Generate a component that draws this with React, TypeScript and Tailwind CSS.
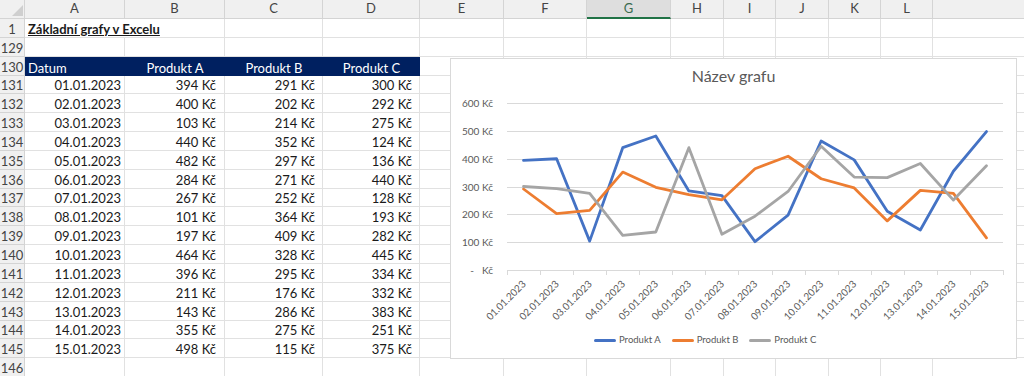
import React from 'react';

const rows: [string, number, number, number][] = [
  ['01.01.2023', 394, 291, 300],
  ['02.01.2023', 400, 202, 292],
  ['03.01.2023', 103, 214, 275],
  ['04.01.2023', 440, 352, 124],
  ['05.01.2023', 482, 297, 136],
  ['06.01.2023', 284, 271, 440],
  ['07.01.2023', 267, 252, 128],
  ['08.01.2023', 101, 364, 193],
  ['09.01.2023', 197, 409, 282],
  ['10.01.2023', 464, 328, 445],
  ['11.01.2023', 396, 295, 334],
  ['12.01.2023', 211, 176, 332],
  ['13.01.2023', 143, 286, 383],
  ['14.01.2023', 355, 275, 251],
  ['15.01.2023', 498, 115, 375],
];

const cols = [
  { l: 'A', w: 'w-[100px]' },
  { l: 'B', w: 'w-[100px]' },
  { l: 'C', w: 'w-[98px]' },
  { l: 'D', w: 'w-[97px]' },
  { l: 'E', w: 'w-[84px]' },
  { l: 'F', w: 'w-[83px]' },
  { l: 'G', w: 'w-[84px]' },
  { l: 'H', w: 'w-[53px]' },
  { l: 'I', w: 'w-[52px]' },
  { l: 'J', w: 'w-[53px]' },
  { l: 'K', w: 'w-[52px]' },
  { l: 'L', w: 'w-[52px]' },
];

const series = [
  { name: 'Produkt A', color: '#4472C4', idx: 1 },
  { name: 'Produkt B', color: '#ED7D31', idx: 2 },
  { name: 'Produkt C', color: '#A5A5A5', idx: 3 },
];

const kc = (n: number) => `${n} Kč`;

function RowHead({ n }: { n: number }) {
  return (
    <div className="w-[25px] shrink-0 bg-[#f0f0f0] border-r border-b border-[#d4d4d4] text-[#444] flex items-end justify-center leading-[16px]">
      {n}
    </div>
  );
}

function Cells({ content }: { content: (i: number) => React.ReactNode }) {
  return (
    <>
      {cols.map((c, i) => (
        <React.Fragment key={c.l}>{content(i)}</React.Fragment>
      ))}
      <div className="flex-1 border-b border-[#e1e1e1]" />
    </>
  );
}

function Chart() {
  const x0 = 56;
  const step = 496 / 15;
  const zero = 175.7;
  const k = 0.27733;
  const cx = (i: number) => x0 + step * (i + 0.5);
  const cy = (v: number) => zero - v * k;

  return (
    <div className="absolute left-[450px] top-[58px] w-[567px] h-[301px] bg-white border border-[#d9d9d9] flex flex-col">
      <div className="h-[35px] pt-[7px] text-center text-[16px] leading-[20px] text-[#595959]">Název grafu</div>
      <svg width="565" height="236" className="block" fontFamily="Lato" fontSize="10" fill="#595959">
        {[100, 200, 300, 400, 500, 600].map((v) => (
          <g key={v}>
            <line x1={x0} x2={552} y1={Math.round(cy(v)) + 0.5} y2={Math.round(cy(v)) + 0.5} stroke="#d9d9d9" strokeWidth="1" />
            <text x={42} y={cy(v)} textAnchor="end" dominantBaseline="central">
              {v} Kč
            </text>
          </g>
        ))}
        <text x={21} y={zero} textAnchor="middle" dominantBaseline="central">-</text>
        <text x={42} y={zero} textAnchor="end" dominantBaseline="central">Kč</text>
        <line x1={x0} x2={552} y1={Math.round(zero) + 0.5} y2={Math.round(zero) + 0.5} stroke="#d9d9d9" />
        {Array.from({ length: 16 }).map((_, i) => (
          <line key={i} x1={Math.round(x0 + step * i) + 0.5} x2={Math.round(x0 + step * i) + 0.5} y1={Math.round(zero)} y2={Math.round(zero) + 5} stroke="#d9d9d9" />
        ))}
        {rows.map((r, i) => (
          <text key={r[0]} textAnchor="end" transform={`translate(${cx(i) + 3} ${zero + 15}) rotate(-45)`}>
            {r[0]}
          </text>
        ))}
        {series.map((s) => (
          <polyline
            key={s.name}
            fill="none"
            stroke={s.color}
            strokeWidth="2.8"
            strokeLinejoin="round"
            strokeLinecap="round"
            points={rows.map((r, i) => `${cx(i)},${cy(r[s.idx] as number)}`).join(' ')}
          />
        ))}
      </svg>
      <div className="h-[20px] flex items-center pl-[143px] gap-[11px] text-[9.5px] text-[#595959]">
        {series.map((s) => (
          <div key={s.name} className="flex items-center gap-[3px]">
            <span className="w-[22px] h-[3px] rounded-full" style={{ backgroundColor: s.color }} />
            <span>{s.name}</span>
          </div>
        ))}
      </div>
    </div>
  );
}

export default function App() {
  const cell = 'shrink-0 border-r border-b border-[#e1e1e1] flex items-end leading-[16px]';

  return (
    <div className="relative w-[1024px] h-[376px] overflow-hidden bg-white font-['Lato',sans-serif] text-[13px] text-[#1a1a1a]">
      <div className="flex h-[19px] bg-[#f0f0f0] text-[#444]">
        <div className="w-[25px] shrink-0 border-r border-b border-[#d4d4d4] relative">
          <svg width="25" height="18" className="absolute left-0 top-0">
            <polygon points="23,5 23,16 12,16" fill="#cfcfcf" />
          </svg>
        </div>
        {cols.map((c) =>
          c.l === 'G' ? (
            <div key={c.l} className={`${c.w} shrink-0 flex items-center justify-center bg-[#dedede] border-r border-[#d4d4d4] border-b-2 border-b-[#217346] text-[#3a6b50]`}>
              {c.l}
            </div>
          ) : (
            <div key={c.l} className={`${c.w} shrink-0 flex items-center justify-center border-r border-b border-[#d4d4d4]`}>
              {c.l}
            </div>
          )
        )}
        <div className="flex-1 border-b border-[#d4d4d4]" />
      </div>

      <div className="flex h-[18.85px]">
        <RowHead n={1} />
        <Cells
          content={(i) =>
            i === 0 ? (
              <div className={`${cols[0].w} shrink-0 border-b border-[#e1e1e1] flex items-end leading-[16px] pl-[3px] whitespace-nowrap overflow-visible relative z-10`}>
                <span className="font-bold underline">Základní grafy v Excelu</span>
              </div>
            ) : (
              <div className={`${cols[i].w} ${cell}`} />
            )
          }
        />
      </div>

      <div className="flex h-[18.85px]">
        <RowHead n={129} />
        <Cells content={(i) => <div className={`${cols[i].w} ${cell}`} />} />
      </div>

      <div className="flex h-[18.85px]">
        <RowHead n={130} />
        <Cells
          content={(i) => {
            const heads = ['Datum', 'Produkt A', 'Produkt B', 'Produkt C'];
            if (i === 0)
              return <div className={`${cols[i].w} shrink-0 bg-[#002060] text-white flex items-end leading-[16px] pl-[3px]`}>{heads[0]}</div>;
            if (i < 4)
              return <div className={`${cols[i].w} shrink-0 bg-[#002060] text-white flex items-end justify-center leading-[16px]`}>{heads[i]}</div>;
            return <div className={`${cols[i].w} ${cell}`} />;
          }}
        />
      </div>

      {rows.map((r, ri) => (
        <div key={r[0]} className="flex h-[18.85px]">
          <RowHead n={131 + ri} />
          <Cells
            content={(i) => {
              if (i === 0) return <div className={`${cols[i].w} ${cell} justify-end pr-[3px]`}>{r[0]}</div>;
              if (i === 1) return <div className={`${cols[i].w} ${cell} justify-end pr-[8px]`}>{kc(r[1])}</div>;
              if (i < 4) return <div className={`${cols[i].w} ${cell} justify-end pr-[7px]`}>{kc(r[i] as number)}</div>;
              return <div className={`${cols[i].w} ${cell}`} />;
            }}
          />
        </div>
      ))}

      <div className="flex h-[18.85px]">
        <RowHead n={146} />
        <Cells content={(i) => <div className={`${cols[i].w} ${cell}`} />} />
      </div>

      <Chart />
    </div>
  );
}
